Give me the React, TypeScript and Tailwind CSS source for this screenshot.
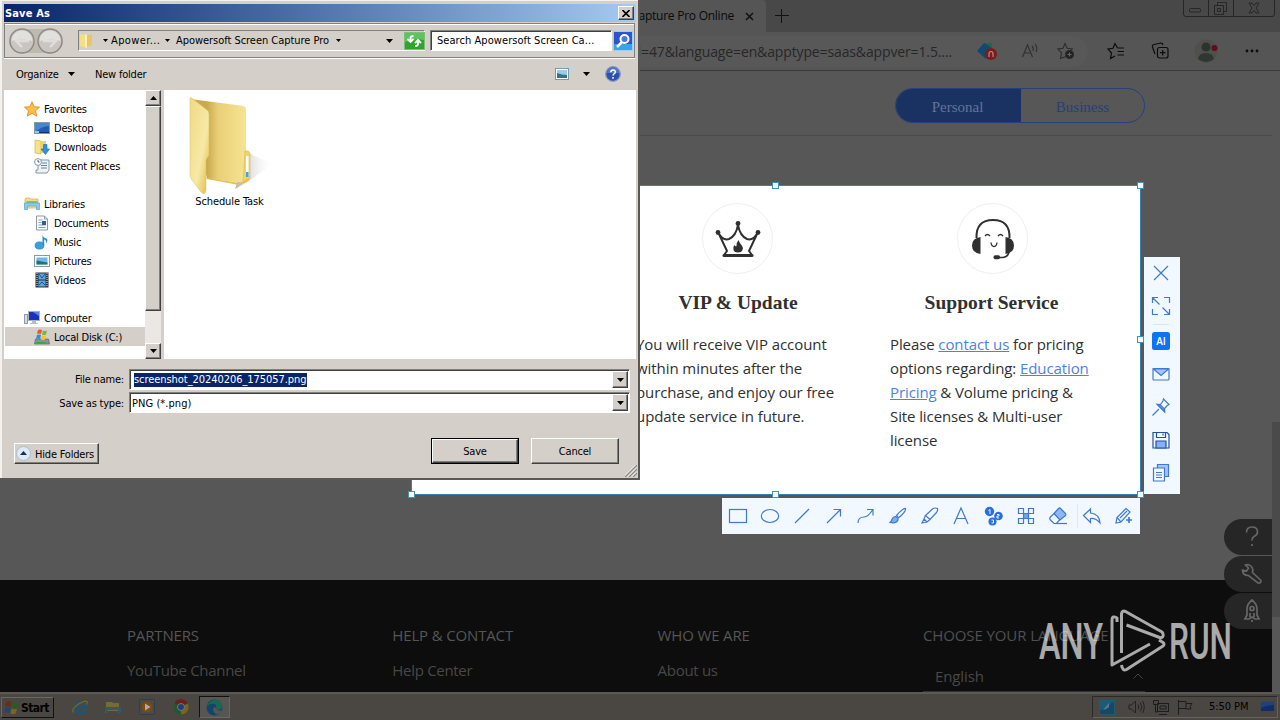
import React from "react";
import { clsx } from "clsx";

const raised =
  "border border-t-white border-l-white border-b-[#404040] border-r-[#404040] shadow-[inset_-1px_-1px_0_#808080] bg-[#d4cfc8]";
const sunken =
  "border border-t-[#808080] border-l-[#808080] border-b-white border-r-white shadow-[inset_1px_1px_0_#404040]";

function Arrow({ up = false, small = false }: { up?: boolean; small?: boolean }) {
  return (
    <svg width={small ? 5 : 7} height={small ? 3 : 4} viewBox="0 0 7 4" className="shrink-0" preserveAspectRatio="none">
      <path d={up ? "M0 4h7L3.500 0z" : "M0 0h7L3.500 4z"} fill="#000" />
    </svg>
  );
}

/* ---------- small shell icons ---------- */

function SideIcon({ name }: { name: string }) {
  return (
    <svg width="16" height="16" viewBox="0 0 16 16" className="shrink-0">
      {name === "star" && (
        <path d="M8 .8l2.200 4.900 5.300.5-4 3.600 1.200 5.300L8 12.300l-4.700 2.800 1.200-5.300-4-3.600 5.300-.5z" fill="#fbc04a" stroke="#e08a1e" strokeWidth=".9" />
      )}
      {name === "desktop" && (
        <>
          <rect x=".5" y="2.500" width="15" height="11" fill="#2459b4" stroke="#8d97a2" />
          <path d="M1 3h14v3Q8 6 1 12z" fill="#4686d8" />
          <path d="M1 12h14v1H1z" fill="#16325f" />
          <path d="M1 11h4v2H1z" fill="#7fd0ee" />
        </>
      )}
      {name === "downloads" && (
        <>
          <path d="M1 1l6 1v13l-6-1z" fill="#f7e28c" stroke="#d6b548" strokeWidth=".7" />
          <path d="M6 2h6v12H6z" fill="#efd270" />
          <path d="M9.500 5.500h3.500v4.500h2.500L11.500 15.500 7 10h2.500z" fill="#2f93dc" stroke="#1668aa" strokeWidth=".6" />
        </>
      )}
      {name === "recent" && (
        <>
          <path d="M4 2h11v10l-2 3H2v-3h2z" fill="#eef3f6" stroke="#8595a3" />
          <path d="M8 5h5M7 7.500h6M7 10h6" stroke="#4e8cb4" />
          <circle cx="4" cy="4" r="3.400" fill="#fff" stroke="#8595a3" />
          <path d="M4 2v2h1.500" stroke="#334" strokeWidth=".8" fill="none" />
        </>
      )}
      {name === "libraries" && (
        <>
          <path d="M1 3l1-1h4l1 1h7v9H1z" fill="#f3dc85" stroke="#d2b85c" strokeWidth=".8" />
          <path d="M2.500 5h11v2h-11z" fill="#7fc08a" />
          <path d="M.500 7h15v6.500h-3V10h-9v3.500h-3z" fill="#8fcbe8" stroke="#5aa4c8" strokeWidth=".7" />
        </>
      )}
      {name === "documents" && (
        <>
          <path d="M2.500 1h8l3 3v11h-11z" fill="#f8fafc" stroke="#8d99a6" />
          <path d="M10.500 1v3h3M4.500 5h4M4.500 7.500h3M4.500 10h7M4.500 12.500h7" stroke="#8ba0c0" fill="none" />
          <rect x="8" y="6" width="4" height="4" fill="#2d5f8e" />
        </>
      )}
      {name === "music" && (
        <>
          <ellipse cx="5.500" cy="11.500" rx="4.400" ry="3.600" fill="#3aa0e0" stroke="#1872b4" strokeWidth=".7" />
          <path d="M8.500 11V.5q.6 3.500 4 4 2 2-.5 5 .5-3.500-1.800-4.100V11z" fill="#2b8dd2" />
        </>
      )}
      {name === "pictures" && (
        <>
          <rect x=".5" y="2.500" width="15" height="11" fill="#fff" stroke="#8d99a6" />
          <rect x="2.500" y="4.500" width="11" height="7" fill="#69b8ea" />
          <path d="M2.500 7.500q5 1 11 2v2h-11z" fill="#286e6e" />
        </>
      )}
      {name === "videos" && (
        <>
          <rect x="1.500" y=".5" width="13" height="15" fill="#2c3640" />
          <rect x="4.500" y="1.500" width="7" height="6" fill="#5aa6dc" />
          <rect x="4.500" y="8.500" width="7" height="6" fill="#5aa6dc" />
          <path d="M3 1v14M13 1v14" stroke="#dfe7ec" strokeDasharray="1 1" />
          <path d="M5 2l3 4 3-4M5 13l3-3 3 3" stroke="#254e9a" fill="none" />
        </>
      )}
      {name === "computer" && (
        <>
          <rect x="4.500" y="1.500" width="11" height="9" fill="#1a33b8" stroke="#a7b2c0" />
          <path d="M9 2h6v4z" fill="#5a7ff0" />
          <path d="M8 11h4v2h2v1H6v-1h2z" fill="#b5bec8" />
          <rect x=".5" y="4.500" width="3" height="9" fill="#d5dbe0" stroke="#8f9aa5" />
        </>
      )}
      {name === "disk" && (
        <>
          <path d="M1.500 10h13l1 5H.5z" fill="#8a9299" stroke="#5e666e" strokeWidth=".7" />
          <path d="M2 13h10v1.500H2z" fill="#2fa84a" />
          <path d="M4 1q2-1 4 0l-1 4q-2-1-4 0z" fill="#e8572b" />
          <path d="M9 1.500q2 1 4 0l-1 4q-2 1-4 0z" fill="#77b83b" />
          <path d="M3 6q2-1 4 0l-1 4q-2-1-4 0z" fill="#3d86dc" />
          <path d="M8 6.500q2 1 4 0l-1 4q-2 1-4 0z" fill="#f6c22c" />
        </>
      )}
    </svg>
  );
}

function LargeFolder() {
  return (
    <svg width="90" height="100" viewBox="0 0 90 100">
      <defs>
        <linearGradient id="shade" x1="0" x2="1">
          <stop offset="0" stopColor="#8a8a8a" />
          <stop offset="1" stopColor="#fff" stopOpacity="0" />
        </linearGradient>
        <linearGradient id="back" x1="0" x2="1">
          <stop offset=".3" stopColor="#c9a94f" />
          <stop offset=".5" stopColor="#e9cf76" />
          <stop offset="1" stopColor="#f6e493" />
        </linearGradient>
        <linearGradient id="front" x1="0" x2="1" y1="0" y2="1">
          <stop offset="0" stopColor="#efd982" />
          <stop offset=".6" stopColor="#f7e9a6" />
          <stop offset="1" stopColor="#dfb93e" />
        </linearGradient>
      </defs>
      <path d="M58 55q18 10 28 10L60 84 46 92z" fill="url(#shade)" opacity=".65" />
      <path d="M1 2L55 9q2 1 2 4v73l-39-4z" fill="url(#back)" />
      <path d="M56 54h3q2 1 2 3v24q-3 5-7 5z" fill="#f1d56c" stroke="#d9b94c" strokeWidth=".6" />
      <rect x="57" y="59" width="2.500" height="20" fill="#fff" />
      <path d="M57 75h2.500v5H57z" fill="#49a0de" />
      <path d="M17 81l34 5 9-5v2l-10 5-32-6z" fill="#e3c04f" />
      <path d="M1 1q1-1 3 1L18 13q2 1 2 4v41l-3 5v30q-1 6-5 2L3 83Q1 80 1 77z" fill="url(#front)" stroke="#d8bd64" strokeWidth=".5" />
    </svg>
  );
}

/* ---------- Save As dialog ---------- */

const places = [
  { icon: "star", label: "Favorites", root: true },
  { icon: "desktop", label: "Desktop" },
  { icon: "downloads", label: "Downloads" },
  { icon: "recent", label: "Recent Places" },
  null,
  { icon: "libraries", label: "Libraries", root: true },
  { icon: "documents", label: "Documents" },
  { icon: "music", label: "Music" },
  { icon: "pictures", label: "Pictures" },
  { icon: "videos", label: "Videos" },
  null,
  { icon: "computer", label: "Computer", root: true },
  { icon: "disk", label: "Local Disk (C:)", active: true },
];

function NavButton({ back = false }: { back?: boolean }) {
  return (
    <svg width="26" height="26" viewBox="0 0 26 26">
      <circle cx="13" cy="13" r="12" fill="#c9c6c1" stroke="#8d8a86" strokeWidth="1.400" />
      <path d="M2.500 13a10.500 10.500 0 0 1 21 0q-10-3-21 0z" fill="#e2e0dd" />
      <path
        d={back ? "M20 13H8m5-6l-6 6 6 6" : "M6 13h12m-5-6l6 6-6 6"}
        stroke="#e0deda"
        strokeWidth="2.400"
        fill="none"
      />
    </svg>
  );
}

function Combo({ children }: { children: React.ReactNode }) {
  return (
    <div className={clsx("flex h-[21px] w-[501px] items-center bg-white p-[1px]", sunken)}>
      <div className="flex-1">{children}</div>
      <div className={clsx("flex h-[17px] w-4 items-center justify-center", raised)}>
        <Arrow />
      </div>
    </div>
  );
}

function SaveDialog() {
  return (
    <div className="absolute left-0 top-0 flex h-[480px] w-[640px] flex-col border-b-2 border-r-2 border-[#5a5855] bg-[#d4cfc8] pl-1 pr-[2px] pt-1 font-['DejaVu_Sans_Condensed','DejaVu_Sans',sans-serif] text-[11px] leading-[14px] tracking-[-0.2px] text-black shadow-[inset_2px_1px_0_#f4f2ee]">
      <div className="flex h-[18px] w-[632px] shrink-0 items-center justify-between bg-linear-to-r from-[#0a246a] to-[#a6caf0] pl-[1px] pr-[2px]">
        <span className="pt-[1px] font-bold tracking-[0.15px] text-white">Save As</span>
        <span className={clsx("flex h-[14px] w-4 items-center justify-center", raised)}>
          <svg width="8" height="7" viewBox="0 0 8 7">
            <path d="M.5 0l7 7M7.500 0l-7 7" stroke="#000" strokeWidth="1.600" />
          </svg>
        </span>
      </div>

      <div className="mt-[1px] flex h-[35px] w-[631px] shrink-0 items-center border border-[#808080] pl-1 shadow-[0_1px_0_#fff,inset_0_1px_0_#fff]">
        <div className="flex h-6 items-center gap-[2px] rounded-full bg-[#bdbab0]">
          <NavButton back />
          <NavButton />
        </div>
        <div className="ml-[15px] flex h-[21px] w-[347px] items-center border border-b-white border-l-[#808080] border-r-white border-t-[#808080] pl-[1px] tracking-[-0.04px]">
          <svg width="13" height="15" viewBox="0 0 13 15" className="shrink-0">
            <path d="M0 1l6 1v13l-6-2z" fill="#f5df86" />
            <path d="M6 3l6-2v11l-6 2z" fill="#e5c95e" />
            <path d="M5 1l2 1v13l-2-1z" fill="#fbf0b8" />
          </svg>
          <span className="ml-[10px] flex w-2 shrink-0">
            <Arrow small />
          </span>
          <span className="w-[54px] shrink-0 tracking-[0.4px]">Apower...</span>
          <span className="flex w-[11px] shrink-0">
            <Arrow small />
          </span>
          <span className="w-[160px] shrink-0 whitespace-nowrap">Apowersoft Screen Capture Pro</span>
          <Arrow small />
          <span className="ml-[45px]">
            <Arrow />
          </span>
          <svg width="21" height="18" viewBox="0 0 21 18" className="ml-[11px] shrink-0">
            <rect x=".5" y=".5" width="20" height="17" fill="#2fa52f" stroke="#7bbf7b" />
            <path d="M1 1h19v7Q10 6 1 10z" fill="#5cc45c" />
            <path d="M6.500 9V6q0-2 3-2M3.500 7l3 3 3-3M14 9v3q0 2-3 2M11 11l3-3 3 3" stroke="#fff" strokeWidth="1.800" fill="none" />
          </svg>
        </div>
        <div className={clsx("ml-[5px] flex h-[21px] w-[182px] items-center whitespace-nowrap bg-white pl-[6px] pt-[1px] tracking-[0.06px]", sunken)}>
          Search Apowersoft Screen Ca...
        </div>
        <svg width="20" height="20" viewBox="0 0 20 20" className="ml-[1px]">
          <rect x=".5" y=".5" width="19" height="19" fill="#2c54cc" stroke="#9ccdf2" />
          <path d="M1 13h18v6H1z" fill="#36a4e8" />
          <circle cx="11.500" cy="8" r="4" fill="#4a78e4" stroke="#fff" strokeWidth="2" />
          <path d="M9 11l-5 5" stroke="#fff" strokeWidth="2.500" />
        </svg>
      </div>

      <div className="flex h-8 shrink-0 items-center pl-3">
        <span className="w-[52px] pt-[1px]">Organize</span>
        <Arrow />
        <span className="ml-5 flex-1 pt-[1px]">New folder</span>
        <svg width="14" height="12" viewBox="0 0 14 12">
          <rect x=".5" y=".5" width="13" height="11" fill="#fff" stroke="#7f97a8" />
          <path d="M2 2h10v8H2z" fill="#9bcbe6" />
          <path d="M2 5q5 2 10 2v3H2z" fill="#35708c" />
        </svg>
        <span className="ml-[14px]">
          <Arrow />
        </span>
        <svg width="16" height="16" viewBox="0 0 16 16" className="ml-[15px] mr-[15px]">
          <circle cx="8" cy="8" r="7.300" fill="#2a50b4" stroke="#8c98b4" strokeWidth="1.300" />
          <path d="M2 7a6 6 0 0 1 12 0z" fill="#5577c8" />
          <path d="M5.800 6.300q0-2.300 2.300-2.300t2.200 2q0 1.200-1.300 1.900-.9.500-.9 1.600M8 11v1.700" stroke="#fff" strokeWidth="1.500" fill="none" />
        </svg>
      </div>

      <div className="flex h-[269px] w-[632px] shrink-0">
        <div className="w-[141px] bg-white pl-[1px] pt-[9px]">
          {places.map((p, i) => (
            <div
              key={i}
              className={clsx(
                "flex h-[19px] items-center gap-1 whitespace-nowrap",
                p?.root ? "pl-[19px]" : "pl-[29px]",
                p?.active && "bg-[#d4cfc8]"
              )}
            >
              {p && <SideIcon name={p.icon} />}
              {p && <span className="pt-[2px]">{p.label}</span>}
            </div>
          ))}
        </div>
        <div className="flex w-4 flex-col bg-[#ebe8e4]">
          <div className={clsx("flex h-4 items-center justify-center", raised)}>
            <Arrow up />
          </div>
          <div className={clsx("h-[205px]", raised)} />
          <div className="flex-1" />
          <div className={clsx("flex h-4 items-center justify-center", raised)}>
            <Arrow />
          </div>
        </div>
        <div className="w-[3px] bg-[#d4cfc8]" />
        <div className="flex-1 bg-white pl-[25px] pt-[7px]">
          <div className="flex w-[90px] flex-col">
            <LargeFolder />
            <span className="-mt-[2px] w-[81px] text-center tracking-[-0.1px]">Schedule Task</span>
          </div>
        </div>
      </div>

      <div className="mt-[10px] flex items-center">
        <span className="w-[120px] pt-[1px] text-right">File name:</span>
        <span className="ml-[5px]">
          <Combo>
            <span className="ml-[3px] inline-block h-[14px] w-[173px] whitespace-nowrap bg-[#0a246a] align-top tracking-[-0.06px] text-white">
              screenshot_20240206_175057.png
            </span>
          </Combo>
        </span>
      </div>
      <div className="mt-[2px] flex items-center">
        <span className="w-[120px] pt-[2px] text-right">Save as type:</span>
        <span className="ml-[5px]">
          <Combo>
            <span className="ml-[1px] inline-block pt-[2px] tracking-[0.05px]">PNG (*.png)</span>
          </Combo>
        </span>
      </div>

      <div className="mt-[25px] flex pl-[10px]">
        <div className={clsx("mt-[5px] flex h-[21px] w-[85px] items-center gap-1 whitespace-nowrap pl-[1px]", raised)}>
          <svg width="15" height="15" viewBox="0 0 15 15">
            <circle cx="7.500" cy="7.500" r="7" fill="#dcebf6" stroke="#a8bccd" />
            <path d="M4 9h7L7.500 5z" fill="#1d2f4c" />
          </svg>
          <span className="pt-[2px]">Hide Folders</span>
        </div>
        <div className="ml-[332px] h-[26px] w-[88px] bg-black p-[1px]">
          <div className={clsx("flex h-6 items-center justify-center pt-[1px]", raised)}>Save</div>
        </div>
        <div className={clsx("ml-3 flex h-[26px] w-[88px] items-center justify-center pt-[1px]", raised)}>Cancel</div>
      </div>
      <svg width="12" height="12" viewBox="0 0 12 12" className="absolute bottom-[1px] right-[1px]">
        <path d="M0 12L12 0M4 12l8-8M8 12l4-4" stroke="#8a8782" strokeWidth="1.400" />
        <path d="M-1 11.500L11 -.5M3 11.500l8-8M7 11.500l4-4" stroke="#fff" strokeWidth=".8" />
      </svg>
    </div>
  );
}

/* ---------- browser ---------- */

function BrowserChrome() {
  return (
    <div className="font-['Open_Sans',sans-serif]">
      <div className="flex h-8 bg-[#484848]">
        <div className="flex w-[766px] items-center justify-end rounded-tr bg-[#555] pr-3">
          <span className="text-[12px] tracking-[-0.25px] text-[#0a0a0a]">Capture Pro Online</span>
          <svg width="9" height="9" viewBox="0 0 9 9" className="ml-[11px]">
            <path d="M1 1l7 7M8 1l-7 7" stroke="#111" strokeWidth="1.500" />
          </svg>
        </div>
        <svg width="14" height="14" viewBox="0 0 14 14" className="ml-[9px] mt-[9px]">
          <path d="M6.500 0v14M0 6.500h14" stroke="#111" />
        </svg>
        <svg width="94" height="17" viewBox="0 0 94 17" className="ml-auto mr-[4px]" fill="none" stroke="#262626">
          <path d="M1.500 0v14q0 2.500 2.500 2.500h86q2.500 0 2.500-2.500V0M26.500 0v16M51.500 0v16" />
          <rect x="7.500" y="8.500" width="11" height="3.500" rx="1" />
          <path d="M35.500 5.500V2.500h9v9h-3M32.500 5.500h9v9h-9zM35.500 8.500h3v3h-3z" />
          <path d="M67 3h3l2 2.500L74 3h3l-3 5 3 5h-3l-2-2.500L70 13h-3l3-5z" />
        </svg>
      </div>
      <div className="flex h-[39px] items-center border-b border-[#3a3a3a] bg-[#555]">
        <div className="flex h-[31px] w-[1088px] items-center justify-end rounded-full bg-[#585858]">
          <span className="w-[324px] whitespace-nowrap text-right text-[14px] tracking-[-0.13px] text-[#272727]">
            d=47&amp;language=en&amp;apptype=saas&amp;appver=1.5....
          </span>
          <svg width="22" height="20" viewBox="0 0 22 20" className="ml-[24px] mr-[3px]">
            <path d="M1 10L8 2h8v8l-6 8z" fill="#104a70" />
            <path d="M8 2h8v5z" fill="#1d6b45" />
            <circle cx="15" cy="13" r="6" fill="#7a1c1c" />
            <path d="M13 16v-3q0-2.500 2-2.500t2 2.500v3" stroke="#b98a8a" strokeWidth="1.200" fill="none" />
          </svg>
          <svg width="18" height="18" viewBox="0 0 18 18" className="ml-[20px]" fill="none" stroke="#303030" strokeWidth="1.100">
            <path d="M1.500 15L6.500 3l5 12M3.300 11h6.500M11 4q2 2 1 5M14 2q3 4 1 8" />
          </svg>
          <svg width="18" height="18" viewBox="0 0 18 18" className="ml-[18px] mr-[13px]" fill="none" stroke="#2c2c2c" strokeWidth="1.100">
            <path d="M9 14.500L3.500 16.500l1-5.500-3.500-4 5-.7L8 1.500l2.300 4.800 5 .7-1.500 2" />
            <circle cx="12.500" cy="12.500" r="4" fill="#222" />
            <path d="M10.500 12.500h4M12.500 10.500v4" stroke="#666" />
          </svg>
        </div>
        <svg width="18" height="18" viewBox="0 0 18 18" className="ml-[19px]" fill="none" stroke="#0c0c0c" strokeWidth="1.200">
          <path d="M10.500 6L8 1.500 6 6.300 1 7l3.500 4-1 5.500L8 14M10.500 6H17M10.500 9.500H17M10.500 13H17" />
        </svg>
        <svg width="18" height="18" viewBox="0 0 18 18" className="ml-[26px]" fill="none" stroke="#0c0c0c" strokeWidth="1.200">
          <path d="M4 12L1.500 5Q1 3 3 2.500l7-1.500q1.500 0 2 2" />
          <rect x="6.500" y="5.500" width="10.500" height="10.500" rx="2" />
          <path d="M11.700 8v5.500M9 10.700h5.500" />
        </svg>
        <svg width="24" height="24" viewBox="0 0 24 24" className="ml-[25px]">
          <circle cx="12" cy="12" r="11.500" fill="#504f4d" />
          <circle cx="12" cy="8" r="4.500" fill="#2c322d" />
          <path d="M4 20q1-6 8-6t8 6q-8 6-16 0z" fill="#2f3830" />
          <circle cx="20.500" cy="9" r="3" fill="#5c0f1a" />
        </svg>
        <svg width="14" height="4" viewBox="0 0 14 4" className="ml-[27px]" fill="#0c0c0c">
          <circle cx="2" cy="2" r="1.400" />
          <circle cx="7" cy="2" r="1.400" />
          <circle cx="12" cy="2" r="1.400" />
        </svg>
      </div>
    </div>
  );
}

const footerColumns = [
  { title: "PARTNERS", link: "YouTube Channel" },
  { title: "HELP & CONTACT", link: "Help Center" },
  { title: "WHO WE ARE", link: "About us" },
];

function WebPage() {
  return (
    <div className="flex h-[621px]">
      <div className="flex w-[1272px] flex-col bg-[#575757]">
        <div className="flex h-[65px] border-b border-[#4a4a4a] pl-[895px] pt-[17px]">
          <div className="flex h-[35px] w-[250px] overflow-hidden rounded-full border border-[#24407e] font-['Liberation_Serif',serif] text-[15px] leading-[36px]">
            <div className="w-[125px] bg-[#1a3261] pr-[2px] text-center text-[#667297]">Personal</div>
            <div className="flex-1 text-center text-[#24407e]">Business</div>
          </div>
        </div>
        <div className="h-[444px]" />
        <div className="flex h-[112px] bg-[#0d0d0d] pl-[127px] pt-[44px] font-['Open_Sans',sans-serif] text-[15px] leading-[22px] tracking-[-0.3px] text-[#484848]">
          {footerColumns.map((c) => (
            <div key={c.title} className="w-[265.300px]">
              <div className="tracking-[-0.15px] text-[#565656]">{c.title}</div>
              <div className="mt-[13px]">{c.link}</div>
            </div>
          ))}
          <div className="w-[222px]">
            <div className="whitespace-nowrap tracking-[-0.1px] text-[#505050]">CHOOSE YOUR LANGUAGE</div>
            <div className="mt-[16px] flex h-[30px] items-center justify-between border-b border-[#333] pb-[1px] pl-3 pr-[2px] tracking-[-0.1px]">
              English
              <svg width="10" height="6" viewBox="0 0 10 6">
                <path d="M.5 5.500L5 1l4.500 4.500" stroke="#444" fill="none" />
              </svg>
            </div>
          </div>
        </div>
      </div>
      <div className="flex flex-1 flex-col bg-[#575757]">
        <div className="mt-[351px] h-[195px] bg-[#4a4a4a]" />
      </div>
    </div>
  );
}

function Taskbar() {
  return (
    <div className="flex h-7 items-center border-t border-[#5a5854] bg-[#4a4743] font-['DejaVu_Sans_Condensed',sans-serif] text-[11px] text-black shadow-[inset_0_1px_0_#5e5b57]">
      <div className="ml-[1px] mt-[2px] flex h-[21px] w-[53px] items-center gap-[2px] border border-b-[#111] border-l-[#6a6762] border-r-[#111] border-t-[#6a6762] pl-[2px] text-[12px] font-bold tracking-[-0.6px]">
        <svg width="15" height="15" viewBox="0 0 15 15" className="shrink-0">
          <path d="M2 2q3-2 5.500 0l-1 5q-3-1.500-5.500 0z" fill="#63301c" />
          <path d="M8.500 2.500q3 1.500 6 0l-1.500 5q-3 1.500-5.500 0z" fill="#2d5a22" />
          <path d="M1 8q3-1.500 5.500 0l-1 5q-2.500-1.500-5 0z" fill="#22437a" />
          <path d="M7.500 8.500q3 1.500 5.500 0l-1.300 5q-3 1.500-5.200 0z" fill="#7a661c" />
        </svg>
        Start
      </div>
      <svg width="16" height="16" viewBox="0 0 16 16" className="ml-[18px]" fill="none">
        <path d="M13.500 11A5.500 5.500 0 1 1 13.800 8.500H4" stroke="#1e5573" strokeWidth="2.300" />
        <path d="M1.500 13.500Q-1 10 6 5.500T15 2.500q.5 1-.5 3" stroke="#7a6a20" strokeWidth="1.200" />
      </svg>
      <svg width="16" height="16" viewBox="0 0 16 16" className="ml-[17px]">
        <path d="M1 3h6l1 1h6v8H1z" fill="#77693a" />
        <path d="M0 8h16v6h-3v-3H3v3H0z" fill="#305a6c" />
      </svg>
      <svg width="16" height="16" viewBox="0 0 16 16" className="ml-[18px]">
        <rect x=".5" y=".5" width="15" height="15" rx="1" fill="#4c4a46" stroke="#2f3e4e" />
        <circle cx="8" cy="8" r="5.500" fill="#7c4a12" />
        <path d="M6 4.500v7L11.500 8z" fill="#aaa" />
      </svg>
      <svg width="16" height="16" viewBox="0 0 16 16" className="ml-[18px]">
        <circle cx="8" cy="8" r="7.500" fill="#1f5a2c" />
        <path d="M8 8L1.500 4A7.500 7.500 0 0 1 14.500 4z" fill="#711d18" />
        <path d="M8 8L14.700 4.500A7.500 7.500 0 0 1 8 15.500z" fill="#7d6516" />
        <circle cx="8" cy="8" r="3.500" fill="#1c3f78" stroke="#777" />
      </svg>
      <div className="ml-[10px] mt-[1px] flex h-[22px] w-[31px] items-center justify-center border border-b-[#6a6762] border-l-[#111] border-r-[#6a6762] border-t-[#111] bg-[#585653]">
        <svg width="17" height="17" viewBox="0 0 16 16">
          <circle cx="8" cy="8" r="7.500" fill="#11466b" />
          <path d="M1 7Q3 .5 9 .6 15.500 1.500 15.400 7q-.4 3-4 3-2 0-1.500-2Q10 4.500 6 4.500 2.500 4.700 1 7z" fill="#1c6654" />
          <path d="M10 8q-1 3 5 3-1 3-5 3.500-4-2-3-6.500z" fill="#585653" />
        </svg>
      </div>
      <div className="ml-auto mr-[2px] mt-[1px] flex h-[22px] w-[186px] items-center border border-b-[#66635e] border-l-[#2b2927] border-r-[#66635e] border-t-[#2b2927] pl-[6px]">
        <svg width="16" height="15" viewBox="0 0 16 15">
          <rect width="16" height="15" fill="#215873" />
          <path d="M1 10q8-1 12-8l2 1v11H1z" fill="#194660" />
          <path d="M4 10l6-7v4l-3 2z" fill="#4c8098" />
        </svg>
        <svg width="17" height="14" viewBox="0 0 17 14" className="ml-[13px]" fill="none" stroke="#222">
          <path d="M1 5h2.500l4-4v12l-4-4H1zM10 4.500q1.500 2.500 0 5M12.300 2.500q3 4.500 0 9M14.500 1q3.500 6 0 12" />
        </svg>
        <svg width="16" height="15" viewBox="0 0 16 15" className="ml-[8px]" fill="none" stroke="#1c1c1c">
          <rect x="4.500" y="3.500" width="11" height="8" />
          <path d="M6 14.500h8M.5.500h5v4h-5zM2.500 5v7h2M7 6h6v3H7z" />
        </svg>
        <svg width="16" height="16" viewBox="0 0 16 16" className="ml-[8px]" fill="none" stroke="#1c1c1c">
          <path d="M1.500 1v15M2 2.500h7v7H2M9 4.500h6l-2 3 1 2.500H9" />
        </svg>
        <span className="ml-[16px] w-[48px] whitespace-nowrap pt-[1px] tracking-[-0.05px]">5:50 PM</span>
        <svg width="16" height="14" viewBox="0 0 16 14" className="ml-[3px]">
          <rect x=".5" y="1.500" width="14" height="10" fill="#142c63" stroke="#3f464e" />
          <path d="M1 2h13v3q-7 0-13 3z" fill="#1e427c" />
        </svg>
      </div>
    </div>
  );
}

/* ---------- capture selection ---------- */

function Handle({ className }: { className: string }) {
  return <div className={clsx("absolute size-[7px] border border-[#3a93c0] bg-[#f2fdff]", className)} />;
}

function Selection() {
  return (
    <div className="absolute left-[411px] top-[185px] h-[310px] w-[730px] border border-[#2f86b4] bg-white font-['Open_Sans',sans-serif] text-[15px] leading-6 tracking-[-0.1px] text-[#303030]">
      <div className="flex gap-[49px] pl-[223px] pt-[17px]">
        <div className="w-[206px]">
          <div className="ml-[67px] flex size-[71px] items-center justify-center rounded-full border border-[#efefef]">
            <svg width="46" height="38" viewBox="0 0 46 38" fill="none" stroke="#303030" strokeWidth="2">
              <path d="M9 35L12 31 3.500 13Q8 21 14 19 21 16 23 5q2 11 9 14 6 2 10.500-6L34 31l3 4" strokeLinejoin="round" />
              <path d="M9 35.500h28" strokeWidth="3" strokeLinecap="round" />
              <g fill="#303030" stroke="none">
                <circle cx="23" cy="3.500" r="2.400" />
                <circle cx="3" cy="12.500" r="2.400" />
                <circle cx="43" cy="12.500" r="2.400" />
                <path d="M23.500 20q1 3 3 5 2 2.500 1 5t-4.500 2.500T18.500 30q-1-3 1-5 1 2 2 1-.5-3 2-6z" />
              </g>
            </svg>
          </div>
          <h3 className="mt-[17px] text-center font-['Liberation_Serif',serif] text-[19.500px] font-bold tracking-normal">VIP &amp; Update</h3>
          <p className="mt-[17px] whitespace-nowrap pl-[1px] tracking-[-0.07px]">
            You will receive VIP account
            <br />
            within minutes after the
            <br />
            <span className="tracking-[-0.12px]">purchase, and enjoy our free</span>
            <br />
            update service in future.
          </p>
        </div>
        <div className="w-[206px]">
          <div className="ml-[67px] flex size-[71px] items-center justify-center rounded-full border border-[#efefef]">
            <svg width="44" height="42" viewBox="0 0 44 42" fill="none" stroke="#303030" strokeWidth="2">
              <path d="M5.500 20Q5 2 22 2t16.500 18" />
              <path d="M9.500 19v17Q1 35 1 27.500T9.500 19zM34.500 19v17Q43 35 43 27.500T34.500 19z" fill="#303030" stroke="none" />
              <path d="M38 34q-1 5-6 5.500h-6" strokeWidth="1.600" />
              <rect x="22.500" y="37.300" width="6.500" height="4" rx="1.700" fill="#303030" stroke="none" />
              <path d="M14 18q2.500-3 5 0M27 18q2.500-3 5 0M20 24.500q.5 4 3 4t3-4" strokeWidth="1.300" />
            </svg>
          </div>
          <h3 className="mt-[17px] pr-[3px] text-center font-['Liberation_Serif',serif] text-[19.500px] font-bold tracking-normal">
            Support Service
          </h3>
          <p className="mt-[17px] whitespace-nowrap">
            Please <a className="text-[#4a84e0] underline">contact us</a> for pricing
            <br />
            options regarding: <a className="text-[#4a84e0] underline">Education</a>
            <br />
            <a className="text-[#4a84e0] underline">Pricing</a> &amp; Volume pricing &amp;
            <br />
            Site licenses &amp; Multi-user
            <br />
            license
          </p>
        </div>
      </div>
      <Handle className="left-[360px] -top-[4px]" />
      <Handle className="left-[725px] -top-[4px]" />
      <Handle className="left-[725px] top-[150px]" />
      <Handle className="left-[725px] top-[305px]" />
      <Handle className="left-[360px] top-[305px]" />
      <Handle className="-left-[4px] top-[305px]" />
    </div>
  );
}

const drawTools: React.ReactNode[] = [
  <rect x="1.500" y="3.500" width="17" height="13" />,
  <ellipse cx="10" cy="10" rx="8.700" ry="6.500" />,
  <path d="M3 17L17 3" />,
  <path d="M3 17L16.500 3.500M9.500 3.500h7v7" />,
  <path d="M2 17q0-6 6-6 4 0 8.500-7M11 3.500h6v6" />,
  <>
    <path d="M17.500 2.500Q15 2 8.500 9.500l2 2.200Q18 6 17.500 2.500z" />
    <path d="M7.500 10.500q-3 .5-3.500 3-.5 2-2 3 6 1.500 8-2.500.5-2-2.500-3.500z" fill="#7facf3" />
  </>,
  <>
    <path d="M5.500 9.500L13 2.500q2.500-1 4.500 0 .5 2-1 4L10 13.500z" />
    <path d="M5.500 9.500L4 13l3 3 3-2.500M4 13l-2 4 5-1" />
  </>,
  <path d="M2 18L9 2l7 16M4.500 12.500h9" />,
  <g fill="#2a6fe0" stroke="none">
    <circle cx="5.500" cy="5.500" r="4.700" />
    <circle cx="14.500" cy="10" r="4.300" />
    <circle cx="8.500" cy="15.500" r="4" />
    <path d="M4.500 4.500L6 3.500V8M13 8.500h2v1.500h-2V12h2M7.500 14h2v3h-2" stroke="#e8f3ff" strokeWidth="1" fill="none" />
  </g>,
  <>
    <path d="M2.500 2.500h5v5h-5zM12.500 2.500h5v5h-5zM2.500 12.500h5v5h-5zM12.500 12.500h5v5h-5z" />
    <path d="M7.500 7.500h5v5h-5z" fill="#6fa5f5" />
  </>,
  <>
    <path d="M2 11.500l4-4 6 6-3.500 4H6l-4-4q-.7-1 0-2z" />
    <path d="M6 7.500l4.500-5q1-1 2 0l5 5q.7 1 0 2l-5.500 4.500z" fill="#8db8f7" />
    <path d="M7 17.500h12" />
  </>,
];

const editTools: React.ReactNode[] = [
  <path d="M1.500 9.500l7-6.500v4q9 1 9.500 10-4-5-9.500-4.500v4z" />,
  <>
    <path d="M2 17l1-5.500L12 2.500l4 3.500-9 10z M3 11.500l4 4.500M6 12l7-7" />
    <path d="M15 11v6M12 14h6" strokeWidth="1.700" />
  </>,
];

const sideTools: React.ReactNode[] = [
  <path d="M3 3l14 14M17 3L3 17" />,
  <path d="M1.500 7V1.500h5.500M13 1.500h5.500V7M18.500 13v5.500H13M7 18.500H1.500V13M2 2l6.500 6.500M11.500 11.500l6.500 6.500" />,
  <>
    <rect x="1" y="1" width="18" height="18" rx="2.500" fill="#0f74f4" stroke="none" />
    <text x="10" y="14" textAnchor="middle" fontSize="10" fontWeight="600" fill="#fff" stroke="none" fontFamily="Open Sans">
      AI
    </text>
  </>,
  <>
    <rect x="2" y="4.500" width="16" height="11.500" rx="1" />
    <path d="M2.500 5l7.500 6.500L17.500 5z" fill="#a4c6fa" />
  </>,
  <>
    <path d="M12.500 2l5.500 5.500-1.800 1-2.700 3 .2 3.500-7.700-7.700 3.500.2 2.500-3.500zM8 12l-6.500 6.500" />
    <path d="M7 8l6.500 6.500v-2.500L9.500 8z" fill="#7facf3" />
  </>,
  <>
    <path d="M2 2.500h14l2 2V18H2z" stroke="#24509c" />
    <path d="M5.500 2.500v5h9v-5M12 3.500v2" stroke="#24509c" />
    <path d="M5 11h10v7H5z" fill="#86b1f7" stroke="#24509c" />
  </>,
  <>
    <path d="M6.500 5V1.500h11v12h-3.500" fill="#a4c6fa" />
    <path d="M2.500 5h11v13h-11z" fill="#f1f8ff" />
    <path d="M5 9.500h6M5 12h6M5 14.500h6" strokeWidth="1" />
  </>,
];

function Tool({ children }: { children: React.ReactNode }) {
  return (
    <svg width="20" height="20" viewBox="0 0 20 20" fill="none" stroke="#4179d2" strokeWidth="1.200" className="shrink-0">
      {children}
    </svg>
  );
}

function CaptureToolbars() {
  return (
    <>
      <div className="absolute left-[722px] top-[498px] flex h-9 w-[418px] items-center gap-3 bg-[#f1f8ff] pl-[6px]">
        {drawTools.map((t, i) => (
          <Tool key={i}>{t}</Tool>
        ))}
        <div className="-ml-[3px] -mr-[8px] h-6 w-[1px] bg-[#dfe8f2]" />
        {editTools.map((t, i) => (
          <Tool key={i}>{t}</Tool>
        ))}
      </div>
      <div className="absolute left-[1144px] top-[257px] flex h-[237px] w-9 flex-col items-center bg-[#f1f8ff] pr-[3px] pt-[6px]">
        <div className="flex flex-col gap-[13px]">
          {sideTools.slice(0, 2).map((t, i) => (
            <Tool key={i}>{t}</Tool>
          ))}
        </div>
        <div className="mb-[6px] mt-[8px] h-[1px] w-4 bg-[#dfe3ea]" />
        <div className="flex flex-col gap-[13px]">
          {sideTools.slice(2).map((t, i) => (
            <Tool key={i}>{t}</Tool>
          ))}
        </div>
      </div>
    </>
  );
}

/* ---------- floating help buttons and watermark ---------- */

function FloatingButtons() {
  const paths = [
    "M6.500 7.500Q6.500 2 12 2t5.500 5q0 3-3.500 4.500-2 1-2 4M12 19v2",
    "M8 2.500q-1.500 0-2.500.5l3 3-2 3-4-1q0 5.500 6 5.500l9.500 7.500q3 .5 3-2.500l-8.500-8q1.500-6-4.500-8z",
    "M12 1q5 4 5 9v6l2 4h-4l-3-2-3 2H5l2-4v-6q0-5 5-9zM12 7.500a2 2 0 1 1 0 4 2 2 0 0 1 0-4zM10 14v4M14 14v4M12 21v2",
  ];
  return (
    <div className="absolute left-[1224px] top-[519px] flex flex-col gap-[1px]">
      {paths.map((d) => (
        <div key={d} className="flex h-9 w-12 items-center justify-center rounded-l-full bg-[#262626] pl-[7px]">
          <svg width="24" height="24" viewBox="0 0 24 24" fill="none" stroke="#666" strokeWidth="1.700">
            <path d={d} />
          </svg>
        </div>
      ))}
    </div>
  );
}

function Watermark() {
  return (
    <svg width="242" height="64" viewBox="0 0 242 64" className="absolute left-[1038px] top-[609px] opacity-65" fill="#fff">
      <text x="1" y="50" fontFamily="Roboto" fontSize="50" fontWeight="500" textLength="64" lengthAdjust="spacingAndGlyphs">
        ANY
      </text>
      <text x="131" y="50" fontFamily="Roboto" fontSize="50" fontWeight="500" textLength="63" lengthAdjust="spacingAndGlyphs">
        RUN
      </text>
      <g fill="none" stroke="#fff" strokeWidth="3" strokeLinejoin="round">
        <path d="M79 13V9q-5-3-5 2v45l38-21" />
        <path d="M83.500 44V5q.5-4 4-2.500L124 23q3 4-1 6L88.500 16" />
        <path d="M83.500 56q1 6.500 5 4.500L125 37q2-2 0-3.500l-4-2.500" />
      </g>
    </svg>
  );
}

export default function App() {
  return (
    <div className="relative h-[720px] w-[1280px] overflow-hidden bg-[#575757]">
      <BrowserChrome />
      <WebPage />
      <Taskbar />
      <FloatingButtons />
      <Selection />
      <CaptureToolbars />
      <Watermark />
      <SaveDialog />
    </div>
  );
}
